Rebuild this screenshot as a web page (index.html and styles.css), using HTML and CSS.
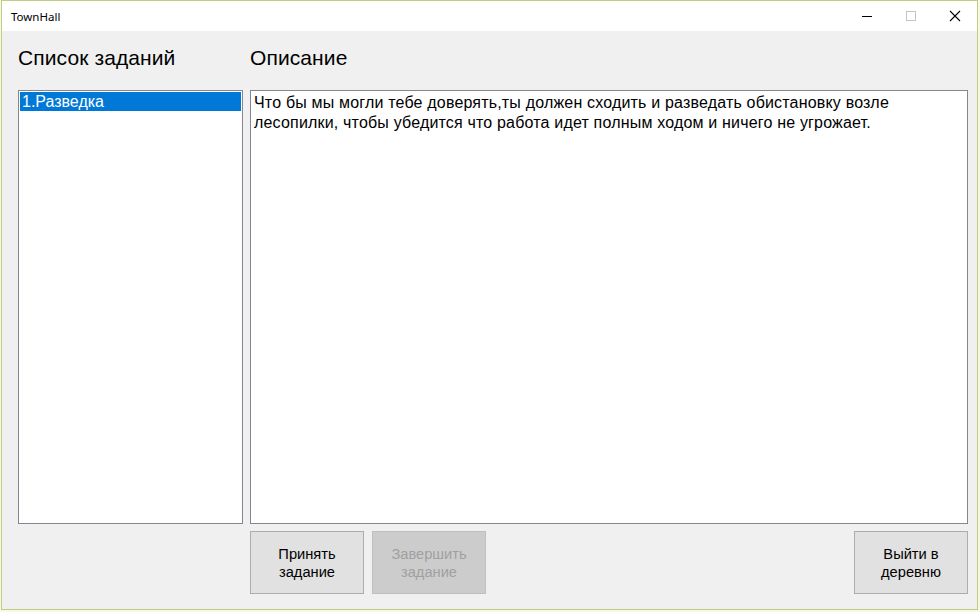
FILE: index.html
```html
<!DOCTYPE html>
<html lang="ru">
<head>
<meta charset="utf-8">
<title>TownHall</title>
<link rel="stylesheet" href="styles.css">
</head>
<body>
<div class="window">
  <div class="titlebar">
    <span class="title">TownHall</span>
    <div class="controls">
      <span class="ctl"><svg width="12" height="12" viewBox="0 0 12 12"><line x1="1" y1="6.5" x2="11" y2="6.5" stroke="#000" stroke-width="1"/></svg></span>
      <span class="ctl"><svg width="12" height="12" viewBox="0 0 12 12"><rect x="1.5" y="1.5" width="9" height="9" fill="none" stroke="#c4c4c4" stroke-width="1"/></svg></span>
      <span class="ctl"><svg width="12" height="12" viewBox="0 0 12 12"><path d="M1 1 L11 11 M11 1 L1 11" stroke="#000" stroke-width="1.1" fill="none"/></svg></span>
    </div>
  </div>
  <div class="content">
    <h2 class="heading">Список заданий</h2>
    <h2 class="heading">Описание</h2>
    <div class="listbox">
      <div class="item selected">1.Разведка</div>
    </div>
    <div class="textbox">Что бы мы могли тебе доверять,ты должен сходить и разведать обистановку возле<br>лесопилки, чтобы убедится что работа идет полным ходом и ничего не угрожает.</div>
    <div class="spacer"></div>
    <div class="buttons">
      <button class="btn">Принять<br>задание</button>
      <button class="btn" disabled>Завершить<br>задание</button>
      <button class="btn right">Выйти в<br>деревню</button>
    </div>
  </div>
</div>
</body>
</html>
```

FILE: styles.css
```css
* { box-sizing: border-box; }
html, body { margin: 0; padding: 0; }
body {
  background: #f7f9e6;
  width: 980px;
  height: 612px;
  padding-left: 1px;
  font-family: "Liberation Sans", Arial, sans-serif;
}
.window {
  width: 977px;
  height: 610px;
  border: 1px solid #c2cc80;
  background: #f0f0f0;
  display: flex;
  flex-direction: column;
}
.titlebar {
  height: 30px;
  background: #ffffff;
  display: flex;
  align-items: center;
  justify-content: space-between;
  padding-left: 9px;
}
.title {
  font-family: "Noto Sans", "Open Sans", sans-serif;
  font-size: 11.5px;
  color: #000;
}
.controls {
  display: flex;
  height: 30px;
  padding-right: 0;
}
.ctl {
  width: 44px;
  display: flex;
  align-items: center;
  justify-content: center;
}
.content {
  flex: 1;
  display: grid;
  grid-template-columns: 225px 718px;
  grid-template-rows: 24px 454px 70px;
  column-gap: 7px;
  padding: 15px 0 0 16px;
}
.heading {
  margin: 0;
  font-weight: normal;
  font-size: 21px;
  line-height: 24px;
  letter-spacing: 0.1px;
  color: #000;
}
.listbox, .textbox {
  grid-row: 2;
  margin-top: 20px;
  height: 434px;
  background: #fff;
  border: 1px solid #828790;
}
.listbox { padding: 1px; }
.item {
  font-size: 16px;
  line-height: 19px;
  height: 19px;
  padding-left: 2px;
  color: #000;
}
.item.selected {
  background: #0078d7;
  color: #fff;
}
.textbox {
  padding: 2px 3px;
  font-size: 16px;
  line-height: 20px;
  letter-spacing: 0.18px;
  color: #000;
}
.buttons {
  padding-top: 7px;
  display: flex;
  gap: 8px;
}
.btn {
  width: 114px;
  height: 63px;
  background: #e1e1e1;
  border: 1px solid #adadad;
  font-family: "Liberation Sans", Arial, sans-serif;
  font-size: 14.67px;
  line-height: 18px;
  color: #000;
  padding: 0;
  margin: 0;
}
.btn:disabled {
  background: #cccccc;
  border-color: #bfbfbf;
  color: #a0a0a0;
}
.btn.right { margin-left: auto; }
```
